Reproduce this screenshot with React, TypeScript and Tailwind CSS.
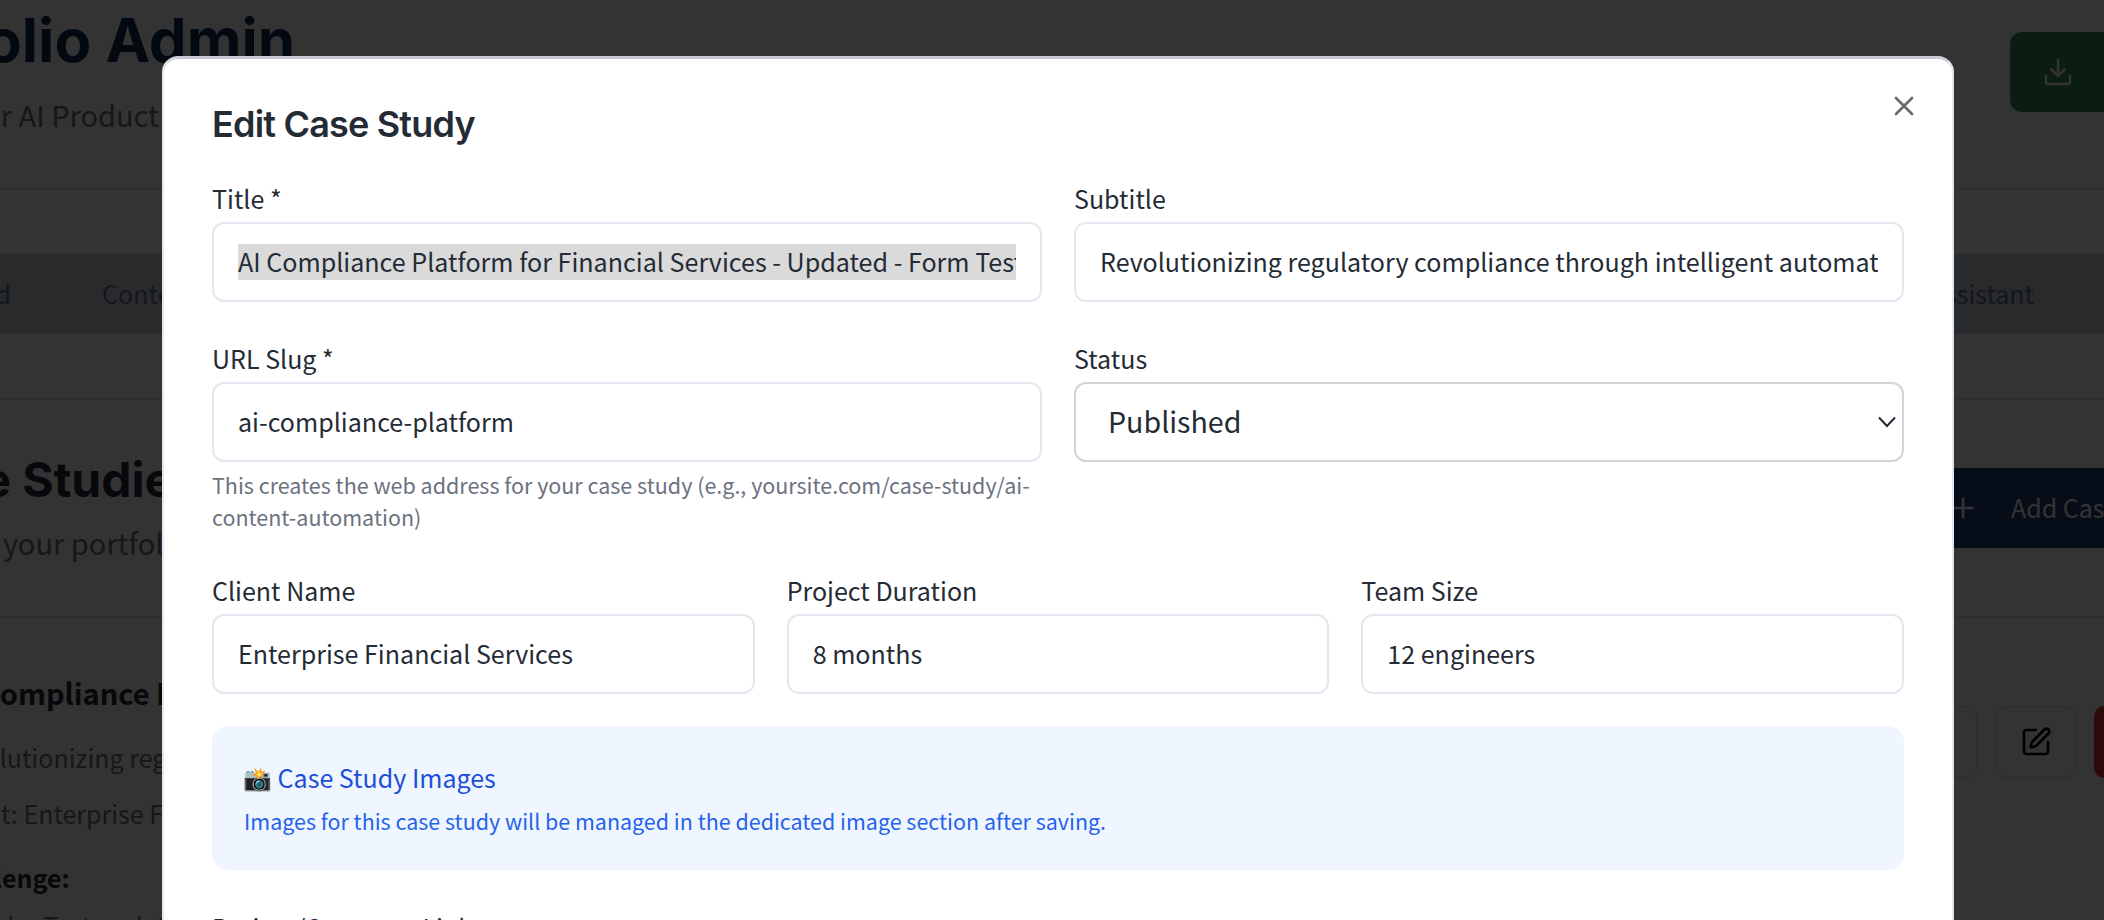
import React from "react";
import { Download, Plus, SquarePen, X } from "lucide-react";

const body = "font-['Noto_Sans_CJK_SC',sans-serif]";

function Field({ label, value, selected }: { label: string; value: string; selected?: boolean }) {
  return (
    <div className="min-w-0">
      <div className="h-[46px] text-[25.04px] leading-[44px] whitespace-nowrap">{label}</div>
      <div className="flex h-[80px] items-center rounded-[12px] border-2 border-[#e2e8f0] bg-white px-[24px]">
        <div className="min-w-0 flex-1 overflow-hidden">
          <span className={selected ? "block h-[36px] w-max bg-[#dadada] text-[25.08px] leading-[34px] whitespace-nowrap" : "block h-[36px] text-[25.06px] leading-[34px] whitespace-nowrap"}>
            {value}
          </span>
        </div>
      </div>
    </div>
  );
}

function Backdrop() {
  return (
    <div className="flex h-[920px] w-[2104px] flex-col overflow-hidden bg-white">
      <header className="flex h-[190px] shrink-0 justify-between border-b-2 border-[#e5e7eb]">
        <div className="flex w-[310px] flex-col items-end">
          <h1 className="mr-[15px] h-[84px] font-['Inter'] text-[60px] leading-[81px] font-bold whitespace-nowrap text-[#0f2f55]">Portfolio Admin</h1>
          <p className="mr-[151px] h-[64px] text-[29px] leading-[60px] whitespace-nowrap text-[#6b7280]">Manage your AI Product</p>
        </div>
        <div className="mt-[32px] flex h-[80px] w-[94px] items-center rounded-l-[12px] bg-[#3a8a60] pl-[32px] text-white">
          <Download size={32} />
        </div>
      </header>
      <nav className="mt-[64px] flex h-[80px] shrink-0 items-center justify-between bg-[#cdd2da] text-[25px] text-[#64748b]">
        <div className="flex w-[196px] justify-end gap-[91px] whitespace-nowrap">
          <span>Dashboard</span>
          <span>Content</span>
        </div>
        <span className="mr-[70px]">AI Assistant</span>
      </nav>
      <section className="mt-[64px] flex h-[220px] shrink-0 justify-between border-y-2 border-[#e5e7eb]">
        <div className="flex w-[200px] flex-col items-end pt-[44px]">
          <h2 className="h-[70px] font-['Inter'] text-[48px] leading-[72px] font-bold whitespace-nowrap text-[#1f2937]">Case Studies</h2>
          <p className="mr-[11px] h-[56px] text-[29px] leading-[56px] whitespace-nowrap text-[#6b7280]">Manage your portfolio</p>
        </div>
        <div className="mt-[68px] flex h-[80px] w-[190px] items-center gap-[32px] bg-[#1e417a] pl-[33px] text-[25px] whitespace-nowrap text-white">
          <Plus size={32} className="shrink-0" />
          <span>Add Case Study</span>
        </div>
      </section>
      <section className="flex h-[302px] shrink-0 justify-between overflow-hidden">
        <div className="-ml-[58px] w-[260px] pt-[44px] text-[25px] whitespace-nowrap text-[#6b7280]">
          <h3 className="ml-[4px] h-[62px] text-[29px] leading-[60px] font-bold text-[#1f2937]">AI Compliance Platform</h3>
          <p className="h-[66px] leading-[66px]">Revolutionizing regulatory</p>
          <p className="h-[48px] leading-[47px]">Client: Enterprise Financial</p>
          <p className="-ml-[3px] h-[75px] leading-[78px] font-bold text-[#1f2937]">Challenge:</p>
          <p className="-ml-[45px] leading-[24px]">Stakeholder Test update</p>
        </div>
        <div className="mt-[88px] flex h-[72px] gap-[16px]">
          <div className="w-[84px] rounded-[12px] border-2 border-[#e2e8f0]" />
          <div className="flex w-[84px] items-center justify-center rounded-[12px] border-2 border-[#e2e8f0]">
            <SquarePen size={32} />
          </div>
          <div className="w-[10px] rounded-l-[12px] bg-[#e03a3a]" />
        </div>
      </section>
    </div>
  );
}

export default function App() {
  return (
    <div className={"relative h-[920px] w-[2104px] overflow-hidden " + body}>
      <Backdrop />
      <div className="absolute inset-0 bg-black/80" />
      <main className="absolute top-[56px] left-[162px] h-[1600px] w-[1792px] rounded-[16px] border-2 border-[#e2e8f0] border-t-[#c9ccd4] bg-white p-[48px] text-[#242b35] shadow-[inset_0_1px_0_#c4c7ce]">
        <X size={32} className="absolute top-[32px] right-[32px] opacity-70" />
        <h2 className="h-[36px] font-['Inter'] text-[36px] leading-[36px] font-semibold tracking-[-0.0225em]">Edit Case Study</h2>
        <div className="mt-[34px] grid grid-cols-2 gap-x-[32px]">
          <Field label="Title *" value="AI Compliance Platform for Financial Services - Updated - Form Test" selected />
          <Field label="Subtitle" value="Revolutionizing regulatory compliance through intelligent automat" />
        </div>
        <div className="mt-[34px] grid h-[198px] grid-cols-2 gap-x-[32px]">
          <div>
            <Field label="URL Slug *" value="ai-compliance-platform" />
            <p className="mt-[7px] text-[21.49px] leading-[32px] text-[#6b7280]">
              This creates the web address for your case study (e.g., yoursite.com/case-study/ai-
              <br />
              content-automation)
            </p>
          </div>
          <div>
            <div className="h-[46px] text-[25.04px] leading-[44px]">Status</div>
            <div className="flex h-[80px] items-center justify-between rounded-[12px] border-2 border-[#d1d5db] pr-[6px] pl-[32px]">
              <span className="h-[40px] text-[28.6px] leading-[38px]">Published</span>
              <svg width="18" height="12" viewBox="0 0 18 12" fill="none" stroke="currentColor" strokeWidth="2">
                <path d="M1 1.5 9 10 17 1.5" />
              </svg>
            </div>
          </div>
        </div>
        <div className="mt-[34px] grid grid-cols-3 gap-x-[32px]">
          <Field label="Client Name" value="Enterprise Financial Services" />
          <Field label="Project Duration" value="8 months" />
          <Field label="Team Size" value="12 engineers" />
        </div>
        <div className="mt-[32px] h-[144px] rounded-[16px] bg-[#eff6ff] px-[32px] pt-[31px]">
          <h4 className="h-[40px] text-[25.04px] leading-[40px] text-[#1d4ed8]">
            <span className="relative -top-px -ml-px text-[23.2px]">📸</span> Case Study Images
          </h4>
          <p className="mt-[8px] text-[21.46px] leading-[32px] text-[#2563eb]">Images for this case study will be managed in the dedicated image section after saving.</p>
        </div>
        <div className="mt-[34px] text-[25.04px] leading-[46px]">Project/Company Link</div>
      </main>
    </div>
  );
}
